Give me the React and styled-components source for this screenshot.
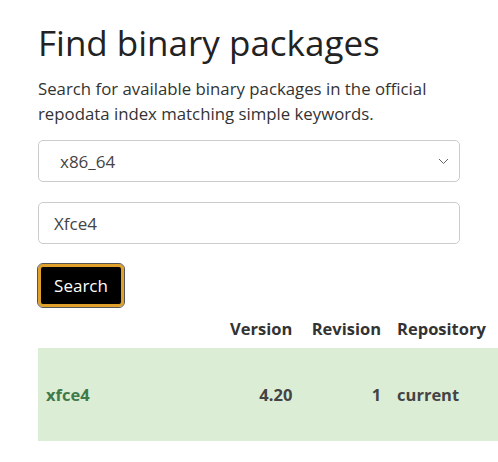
import React from 'react';
import styled, { createGlobalStyle } from 'styled-components';

const Global = createGlobalStyle`
  body { margin: 0; font-family: "Open Sans", "Noto Sans", sans-serif; color: #333; background: #fff; overflow: hidden; }
`;

const Page = styled.div`
  padding: 18px 0 0 38px;
  width: 498px;
  box-sizing: border-box;
`;

const Title = styled.h1`
  font-size: 35px;
  font-weight: 400;
  margin: 0 0 8px;
  line-height: 50px;
  color: #222;
`;

const Lead = styled.p`
  font-size: 16.8px;
  line-height: 25px;
  margin: 0 0 14px;
  width: 430px;
`;

const Field = styled.div`
  width: 422px;
  height: 42px;
  box-sizing: border-box;
  border: 1px solid #ccc;
  border-radius: 5px;
  display: flex;
  align-items: center;
  justify-content: space-between;
  padding: 0 10px 0 ${p => p.$pl}px;
  font-size: 17px;
  color: #444;
  margin-bottom: 20px;
`;

const Button = styled.button`
  width: 86px;
  height: 43px;
  background: #000;
  color: #fff;
  border: 3px solid #e0a12c;
  outline: 1px solid #555;
  border-radius: 5px;
  font: inherit;
  font-size: 17px;
  margin-bottom: 2px;
`;

const Table = styled.table`
  border-collapse: collapse;
  font-size: 16.5px;
  width: 460px;
`;

const Th = styled.th`
  font-weight: 700;
  text-align: ${p => p.$align || 'left'};
  padding: 8px 8px 8px;
  width: ${p => p.$w || 'auto'};
`;

const Row = styled.tr`
  background: #dcedd6;
  height: 93px;
`;

const Td = styled.td`
  font-weight: 700;
  text-align: ${p => p.$align || 'left'};
  padding: 0 8px;
  color: ${p => p.$green ? '#3e7a4a' : '#444'};
`;

export default function App() {
  return (
    <Page>
      <Global />
      <Title>Find binary packages</Title>
      <Lead>Search for available binary packages in the official repodata index matching simple keywords.</Lead>
      <Field $pl={21}>
        <span>x86_64</span>
        <svg width="11" height="7" viewBox="0 0 11 7"><path d="M1 1l4.5 4.5L10 1" fill="none" stroke="#666" strokeWidth="1" /></svg>
      </Field>
      <Field $pl={15}>Xfce4</Field>
      <Button>Search</Button>
      <Table>
        <thead>
          <tr>
            <Th $w="165px"></Th>
            <Th $align="right">Version</Th>
            <Th $align="right">Revision</Th>
            <Th>Repository</Th>
          </tr>
        </thead>
        <tbody>
          <Row>
            <Td $green>xfce4</Td>
            <Td $align="right">4.20</Td>
            <Td $align="right">1</Td>
            <Td>current</Td>
          </Row>
        </tbody>
      </Table>
    </Page>
  );
}
